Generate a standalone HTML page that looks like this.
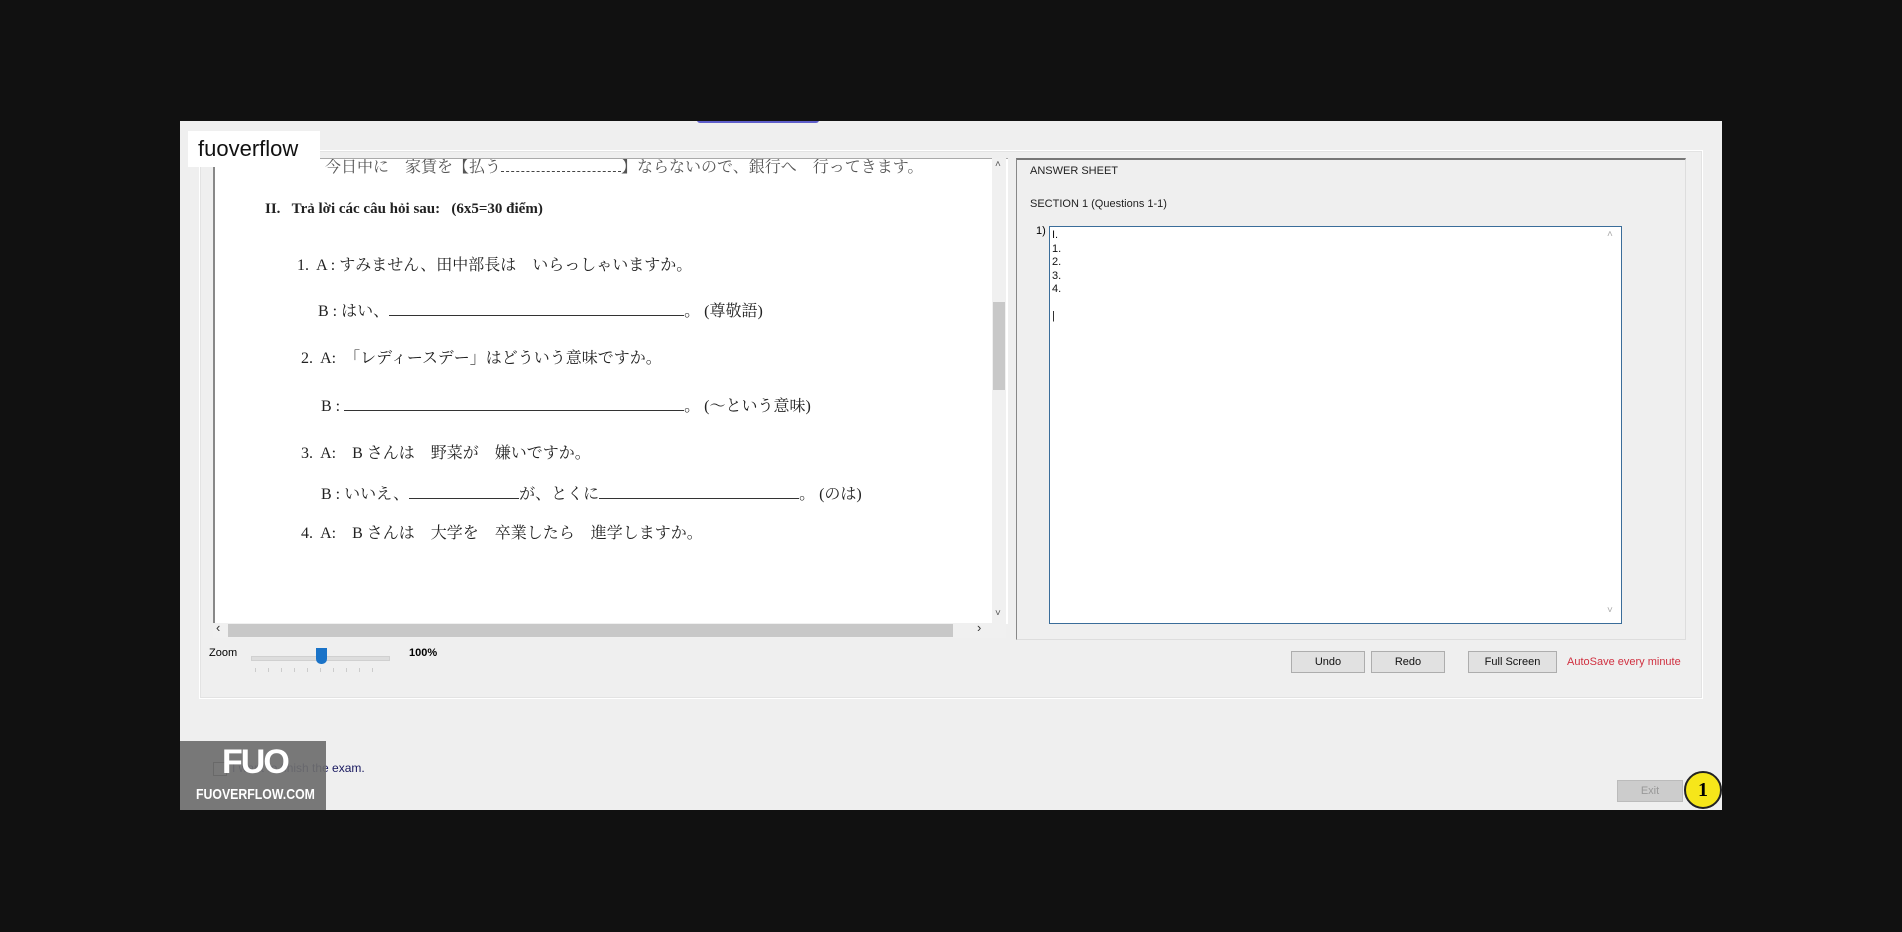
<!DOCTYPE html>
<html><head><meta charset="utf-8"><style>
body{margin:0;width:1902px;height:932px;background:#111;position:relative;overflow:hidden;font-family:"Liberation Sans","Noto Sans CJK JP",sans-serif}
.a{position:absolute}
.win{left:180px;top:121px;width:1542px;height:689px;background:#efefef;overflow:hidden}
.jp{font-family:"Liberation Serif","Noto Serif CJK SC","Noto Sans CJK JP",serif;font-size:16px;color:#222;white-space:nowrap}
.btn{background:#e1e1e1;border:1px solid #adadad;font-size:11px;text-align:center;line-height:20px;color:#111}
.u{display:inline-block;border-bottom:1px solid #333;height:14px;vertical-align:baseline}
</style></head><body>
<div class="a win">
  <div class="a" style="left:517px;top:-4px;width:122px;height:6px;background:#3a3ac0;border-radius:3px;opacity:.8"></div>
  <div class="a" style="left:19px;top:29px;width:1502px;height:547px;border:1px solid #fff;box-shadow:inset 0 0 0 1px #e3e3e3"></div>
  <div class="a" style="left:33px;top:37px;width:793px;height:465px;background:#fff;border-left:2px solid #888;border-top:1px solid #aaa;overflow:hidden">
    <div class="a jp" style="left:110px;top:-5px;color:#555">今日中に　家賃を【払う<span style="border-bottom:1px dashed #444;display:inline-block;width:120px;height:14px"></span>】ならないので、銀行へ　行ってきます。</div>
    <div class="a jp" style="left:50px;top:42px;font-weight:bold;font-size:15px">II.&nbsp;&nbsp;&nbsp;Trả lời các câu hỏi sau:&nbsp;&nbsp;&nbsp;(6x5=30 điểm)</div>
    <div class="a jp" style="left:82px;top:93px">1.&nbsp; A : すみません、田中部長は　いらっしゃいますか。</div>
    <div class="a jp" style="left:103px;top:139px">B : はい、<span class="u" style="width:295px"></span>。 (尊敬語)</div>
    <div class="a jp" style="left:86px;top:186px">2.&nbsp; A:　「レディースデー」はどういう意味ですか。</div>
    <div class="a jp" style="left:106px;top:234px">B : <span class="u" style="width:340px"></span>。 (～という意味)</div>
    <div class="a jp" style="left:86px;top:281px">3.&nbsp; A:　B さんは　野菜が　嫌いですか。</div>
    <div class="a jp" style="left:106px;top:322px">B : いいえ、<span class="u" style="width:110px"></span>が、とくに<span class="u" style="width:200px"></span>。 (のは)</div>
    <div class="a jp" style="left:86px;top:361px">4.&nbsp; A:　B さんは　大学を　卒業したら　進学しますか。</div>
  </div>
  <div class="a" style="left:812px;top:37px;width:14px;height:465px;background:#f0f0f0"></div>
  <div class="a" style="left:813px;top:181px;width:12px;height:88px;background:#c8c8c8"></div>
  <div class="a" style="left:815px;top:38px;font-size:10px;color:#555">˄</div>
  <div class="a" style="left:815px;top:487px;font-size:10px;color:#555">˅</div>
  <div class="a" style="left:33px;top:502px;width:793px;height:15px;background:#f0f0f0"></div>
  <div class="a" style="left:48px;top:503px;width:725px;height:13px;background:#c8c8c8"></div>
  <div class="a" style="left:36px;top:499px;font-size:13px;color:#333">‹</div>
  <div class="a" style="left:797px;top:499px;font-size:13px;color:#333">›</div>
  <div class="a" style="left:29px;top:526px;font-size:11px">Zoom</div>
  <div class="a" style="left:71px;top:535px;width:137px;height:3px;background:#ddd;border:1px solid #d0d0d0"></div>
  <div class="a" style="left:136px;top:527px;width:11px;height:16px;background:#1a73c8;border-radius:0 0 5px 5px"></div>
  <div class="a" style="left:75px;top:547px;width:130px;height:4px;background:repeating-linear-gradient(90deg,#ccc 0 1px,transparent 1px 13px)"></div>
  <div class="a" style="left:229px;top:526px;font-size:11px;font-weight:bold">100%</div>
  <div class="a" style="left:836px;top:37px;width:668px;height:479px;border:1px solid #ddd;border-top:2px solid #777;border-left:1px solid #888"></div>
  <div class="a" style="left:850px;top:44px;font-size:11px;color:#222">ANSWER SHEET</div>
  <div class="a" style="left:850px;top:77px;font-size:11px;color:#222">SECTION 1 (Questions 1-1)</div>
  <div class="a" style="left:856px;top:104px;font-size:11px">1)</div>
  <div class="a" style="left:869px;top:105px;width:571px;height:396px;background:#fff;border:1px solid #3a6d9a"></div>
  <div class="a" style="left:872px;top:108px;font-size:11px;line-height:13.5px;color:#111">I.<br>1.<br>2.<br>3.<br>4.<br><br>|</div>
  <div class="a" style="left:1427px;top:108px;font-size:10px;color:#aaa">˄</div>
  <div class="a" style="left:1427px;top:484px;font-size:10px;color:#aaa">˅</div>
  <div class="a btn" style="left:1111px;top:530px;width:72px">Undo</div>
  <div class="a btn" style="left:1191px;top:530px;width:72px">Redo</div>
  <div class="a btn" style="left:1288px;top:530px;width:87px">Full Screen</div>
  <div class="a" style="left:1387px;top:535px;font-size:11px;color:#d03040">AutoSave every minute</div>
  <div class="a" style="left:33px;top:641px;width:12px;height:12px;border:1px solid #333;background:#fff"></div>
  <div class="a" style="left:52px;top:640px;font-size:12px;color:#1a1a60">I want to finish the exam.</div>
  <div class="a" style="left:0;top:620px;width:146px;height:69px;background:rgba(110,110,110,.92)"></div>
  <div class="a" style="left:42px;top:622px;font-size:34px;font-weight:bold;color:#fff;letter-spacing:-2px">FUO</div>
  <div class="a" style="left:16px;top:665px;font-size:15px;font-weight:bold;color:#fff;transform:scaleX(.82);transform-origin:left">FUOVERFLOW.COM</div>
  <div class="a" style="left:1437px;top:659px;width:64px;height:20px;background:#ccc;border:1px solid #bbb;font-size:11px;color:#999;text-align:center;line-height:20px">Exit</div>
  <div class="a" style="left:1504px;top:650px;width:34px;height:34px;border-radius:50%;background:#f6e61a;border:2px solid #222;text-align:center;line-height:34px;font-weight:bold;font-size:20px;font-family:'Liberation Serif',serif">1</div>
</div>
<div class="a" style="left:188px;top:131px;width:132px;height:36px;background:#fff;font-size:22px;line-height:36px;padding-left:10px;box-sizing:border-box;color:#111">fuoverflow</div>
</body></html>
